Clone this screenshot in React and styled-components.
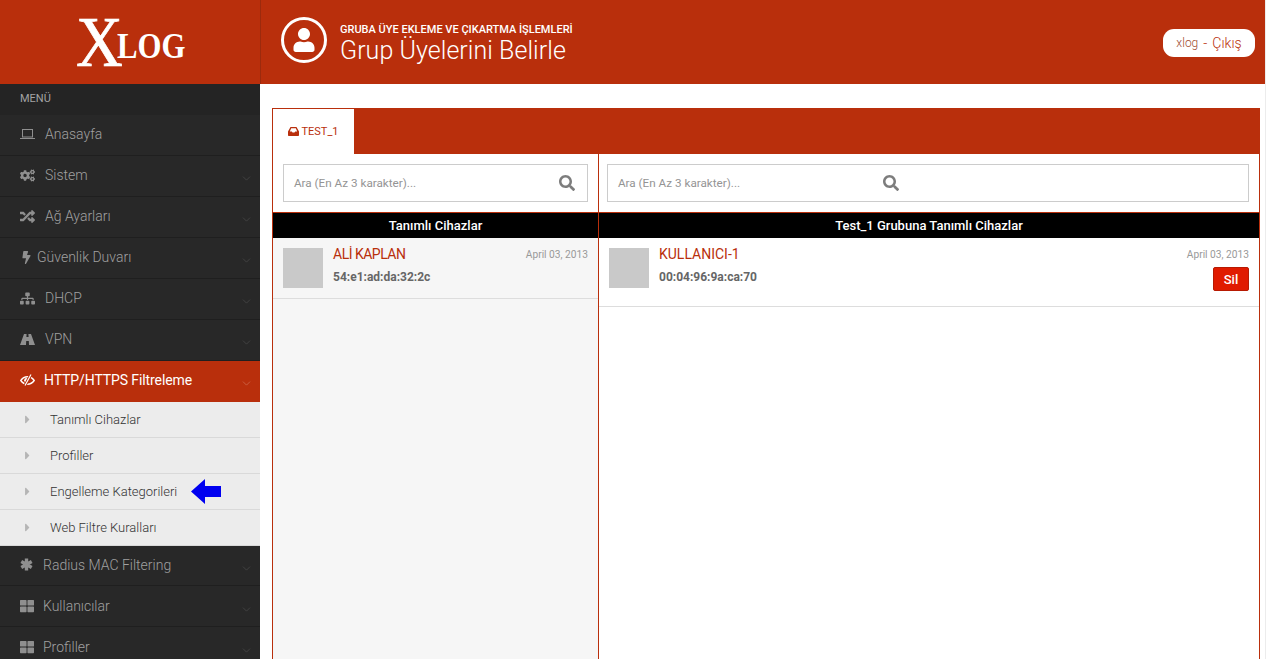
import React from 'react';
import styled, {createGlobalStyle} from 'styled-components';
import {FaCogs, FaRandom, FaBolt, FaSitemap, FaThLarge, FaSearch, FaUser, FaCaretRight} from 'react-icons/fa';
import {ChevronDown} from 'lucide-react';

const red = '#b92f0c';

const GlobalStyle = createGlobalStyle`
    html, body {margin: 0; padding: 0; height: 100%; overflow: hidden; background: #ececec;}
    body {font-family: Roboto, "Liberation Sans", sans-serif;}
    * {box-sizing: border-box;}
`;

const Page = styled.div`
    width: 1265px;
    height: 659px;
    display: flex;
    flex-direction: column;
    overflow: hidden;
    background: white;
`;

const Header = styled.header`
    height: 84px;
    flex: none;
    display: flex;
    background: ${red};
    color: white;
`;

const LogoBox = styled.div`
    width: 261px;
    flex: none;
    display: flex;
    align-items: center;
    justify-content: center;
    border-right: 1px solid #9c2a0d;
    font-family: "Liberation Serif", serif;
`;

const LogoX = styled.span`
    width: 41px;
    font-size: 72px;
    line-height: 72px;
    -webkit-text-stroke: 0.7px white;
    transform: scaleX(0.9);
    transform-origin: left;
`;

const LogoText = styled.span`
    width: 68px;
    font-size: 35px;
    font-weight: bold;
    margin-top: 9px;
    transform: scaleX(0.88);
    transform-origin: left;
`;

const HeadIcon = styled.div`
    width: 46px;
    height: 46px;
    margin: 17px 13px 0 20px;
    border: 3px solid white;
    border-radius: 50%;
    display: flex;
    align-items: center;
    justify-content: center;
    font-size: 24px;
`;

const HeadTitles = styled.div`
    padding-top: 23px;
    flex: 1;
`;

const HeadSmall = styled.div`
    font-size: 11px;
    line-height: 13px;
    font-weight: 500;
`;

const HeadBig = styled.div`
    font-size: 25px;
    line-height: 29px;
    font-weight: 300;
    letter-spacing: 0.05px;
`;

const UserPill = styled.div`
    align-self: flex-start;
    margin: 29px 10px 0 0;
    width: 92px;
    height: 28px;
    background: white;
    border-radius: 11px;
    display: flex;
    align-items: center;
    justify-content: center;
    gap: 5px;
    font-size: 14px;
    font-weight: 300;
    color: ${red};
`;

const UserName = styled.span`
    color: #a04a30;
    font-size: 12px;
`;

const Body = styled.div`
    flex: 1;
    display: flex;
    min-height: 0;
`;

const Sidebar = styled.nav`
    width: 260px;
    flex: none;
    background: #282828;
    display: flex;
    flex-direction: column;
    overflow: hidden;
`;

const MenuLabel = styled.div`
    height: 31px;
    flex: none;
    background: #242424;
    color: #a3a3a3;
    font-size: 11px;
    font-weight: 400;
    padding: 8px 0 0 20px;
`;

const NavItem = styled.div`
    height: ${props => props.$height || 41}px;
    flex: none;
    display: flex;
    align-items: center;
    padding: 0 7px ${props => props.$lift ?? 2}px 20px;
    font-size: 14px;
    font-weight: ${props => props.$active ? 400 : 300};
    letter-spacing: ${props => props.$active ? '-0.1px' : '0'};
    color: ${props => props.$active ? '#fff' : '#a0a0a0'};
    background: ${props => props.$active ? red : 'transparent'};
    border-bottom: 1px solid ${props => props.$active ? red : '#1f1f1f'};
`;

const NavIcon = styled.span`
    width: ${props => props.$width || 25}px;
    flex: none;
    display: flex;
    align-items: center;
    font-size: 14px;
    color: ${props => props.$active ? '#fff' : '#8f8f8f'};
`;

const NavLabel = styled.span`
    flex: 1;
`;

const Chevron = styled(ChevronDown)`
    width: 13px;
    height: 13px;
    color: ${props => props.$active ? '#d2765c' : '#4d4d4d'};
    stroke-width: 1.2;
    margin-top: 7px;
`;

const SubMenu = styled.div`
    flex: none;
    background: #ececec;
`;

const SubItem = styled.div`
    height: 36px;
    display: flex;
    align-items: center;
    font-size: 13px;
    font-weight: 300;
    color: #333;
    padding-left: 24px;
    border-bottom: 1px solid #d9d9d9;
`;

const SubCaret = styled(FaCaretRight)`
    width: 7px;
    height: 13px;
    color: #b5b5b5;
    margin-right: 19px;
`;

const BlueArrow = styled.svg`
    width: 30px;
    height: 25px;
    margin-left: 14px;
`;

const Main = styled.main`
    flex: 1;
    padding: 24px 5px 0 12px;
    min-width: 0;
`;

const Panel = styled.section`
    height: 100%;
    display: flex;
    flex-direction: column;
    border: 1px solid ${red};
    border-bottom: none;
`;

const TabBar = styled.div`
    height: 45px;
    flex: none;
    background: ${red};
    display: flex;
`;

const Tab = styled.div`
    width: 81px;
    background: white;
    display: flex;
    align-items: center;
    justify-content: center;
    gap: 2px;
    font-size: 11px;
    color: ${red};
`;

const Columns = styled.div`
    flex: 1;
    display: flex;
    min-height: 0;
`;

const LeftColumn = styled.div`
    width: 326px;
    flex: none;
    display: flex;
    flex-direction: column;
    border-right: 1px solid ${red};
    background: #f6f6f6;
`;

const RightColumn = styled.div`
    flex: 1;
    display: flex;
    flex-direction: column;
    min-width: 0;
`;

const SearchArea = styled.div`
    height: 59px;
    flex: none;
    background: white;
    padding: 10px ${props => props.$right}px 0 ${props => props.$left}px;
    border-bottom: 1px solid ${red};
`;

const SearchBox = styled.div`
    height: 38px;
    border: 1px solid #ccc;
    display: flex;
    align-items: center;
    padding-left: 10px;
    font-size: 11.7px;
    color: #949494;
    background: white;
`;

const SearchText = styled.span`
    width: ${props => props.$width}px;
    flex: none;
`;

const SearchIcon = styled(FaSearch)`
    width: 16px;
    height: 16px;
    color: #7d7d7d;
`;

const ListTitle = styled.div`
    height: 25px;
    flex: none;
    background: #000;
    color: white;
    font-size: 13px;
    font-weight: 500;
    text-align: center;
    line-height: 25px;
`;

const Row = styled.div`
    height: ${props => props.$height}px;
    flex: none;
    padding: 10px ${props => props.$right}px 0 10px;
    display: flex;
    border-bottom: 1px solid #ddd;
`;

const Avatar = styled.div`
    width: 40px;
    height: 40px;
    flex: none;
    background: #c9c9c9;
    margin-right: 10px;
`;

const RowInfo = styled.div`
    flex: 1;
    min-width: 0;
`;

const RowName = styled.div`
    font-size: 14px;
    line-height: 14px;
    font-weight: 400;
    margin-top: -1px;
    letter-spacing: ${props => props.$tight ? '-0.5px' : '0'};
    color: ${red};
`;

const RowMac = styled.div`
    font-size: 12px;
    font-weight: bold;
    color: #666;
    margin-top: 9px;
`;

const RowSide = styled.div`
    display: flex;
    flex-direction: column;
    align-items: flex-end;
`;

const RowDate = styled.div`
    font-size: 10.2px;
    line-height: 12px;
    margin-top: 1px;
    color: #999;
`;

const DeleteButton = styled.button`
    width: 36px;
    height: 24px;
    margin-top: 6px;
    padding: 0;
    background: #e01b00;
    border: 1px solid #b71a02;
    border-radius: 2px;
    color: white;
    font-family: inherit;
    font-size: 13px;
    font-weight: 500;
`;

const LaptopIcon = () => (
    <svg width="15" height="12" viewBox="0 0 15 12" fill="none" stroke="currentColor">
        <rect x="2.5" y="1.5" width="10" height="7.5"/>
        <path d="M0 10.5H15"/>
    </svg>
);

const RoadIcon = () => (
    <svg width="15" height="11" viewBox="0 0 15 11" fill="currentColor">
        <path d="M4 0H6.6L6.4 3H8.6L8.4 0H11L15 11H9L8.8 7H6.2L6 11H0Z"/>
    </svg>
);

const EyeSlashIcon = () => (
    <svg width="15" height="12" viewBox="0 0 15 12" fill="none" stroke="currentColor">
        <path d="M0.8 6.5C2.5 4 4.8 2.8 7.5 2.8C10.2 2.8 12.5 4 14.2 6.5C12.5 9 10.2 10.2 7.5 10.2C4.8 10.2 2.5 9 0.8 6.5Z" strokeWidth="1.4"/>
        <circle cx="6.4" cy="6.2" r="2.2" fill="currentColor" stroke="none"/>
        <path d="M11 0.5L5 11.5" stroke={red} strokeWidth="3"/>
        <path d="M11 0.5L5 11.5" strokeWidth="1.2"/>
    </svg>
);

const AsteriskIcon = () => (
    <svg width="13" height="13" viewBox="0 0 13 13" stroke="currentColor" strokeWidth="3.4">
        <path d="M6.5 0.5V12.5M1.3 3.5L11.7 9.5M1.3 9.5L11.7 3.5"/>
    </svg>
);

const InboxIcon = () => (
    <svg width="11" height="9" viewBox="0 0 11 9" fill="currentColor">
        <path d="M2.5 0H8.5L11 4.5V8C11 8.6 10.6 9 10 9H1C0.4 9 0 8.6 0 8V4.5ZM3.2 1.2L1.8 4.4H3.8L4.5 5.6H6.5L7.2 4.4H9.2L7.8 1.2Z"/>
    </svg>
);

const items = [
    {label: 'Anasayfa', icon: <LaptopIcon/>, noChevron: true},
    {label: 'Sistem', icon: <FaCogs size={15}/>},
    {label: 'Ağ Ayarları', icon: <FaRandom size={15}/>},
    {label: 'Güvenlik Duvarı', icon: <FaBolt size={13}/>, width: 17},
    {label: 'DHCP', icon: <FaSitemap size={15}/>},
    {label: 'VPN', icon: <RoadIcon/>},
];

const subItems = ['Tanımlı Cihazlar', 'Profiller', 'Engelleme Kategorileri', 'Web Filtre Kuralları'];

const App = () => {
    return (
        <Page>
            <GlobalStyle/>
            <Header>
                <LogoBox>
                    <LogoX>X</LogoX>
                    <LogoText>LOG</LogoText>
                </LogoBox>
                <HeadIcon><FaUser/></HeadIcon>
                <HeadTitles>
                    <HeadSmall>GRUBA ÜYE EKLEME VE ÇIKARTMA İŞLEMLERİ</HeadSmall>
                    <HeadBig>Grup Üyelerini Belirle</HeadBig>
                </HeadTitles>
                <UserPill><UserName>xlog</UserName> - <span>Çıkış</span></UserPill>
            </Header>
            <Body>
                <Sidebar>
                    <MenuLabel>MENÜ</MenuLabel>
                    {items.map(item => (
                        <NavItem key={item.label}>
                            <NavIcon $width={item.width}>{item.icon}</NavIcon>
                            <NavLabel>{item.label}</NavLabel>
                            {!item.noChevron && <Chevron/>}
                        </NavItem>
                    ))}
                    <NavItem $active>
                        <NavIcon $active $width={24}><EyeSlashIcon/></NavIcon>
                        <NavLabel>HTTP/HTTPS Filtreleme</NavLabel>
                        <Chevron $active/>
                    </NavItem>
                    <SubMenu>
                        {subItems.map(label => (
                            <SubItem key={label}>
                                <SubCaret/>
                                {label}
                                {label === 'Engelleme Kategorileri' && (
                                    <BlueArrow viewBox="0 0 30 25">
                                        <path d="M0 12.5 L14 0 V7 H30 V18 H14 V25 Z" fill="#0000f0"/>
                                    </BlueArrow>
                                )}
                            </SubItem>
                        ))}
                    </SubMenu>
                    <NavItem $height={40}>
                        <NavIcon $width={23}><AsteriskIcon/></NavIcon>
                        <NavLabel>Radius MAC Filtering</NavLabel>
                        <Chevron/>
                    </NavItem>
                    <NavItem $lift={0}>
                        <NavIcon $width={23}><FaThLarge/></NavIcon>
                        <NavLabel>Kullanıcılar</NavLabel>
                        <Chevron/>
                    </NavItem>
                    <NavItem $lift={0}>
                        <NavIcon $width={23}><FaThLarge/></NavIcon>
                        <NavLabel>Profiller</NavLabel>
                        <Chevron/>
                    </NavItem>
                </Sidebar>
                <Main>
                    <Panel>
                        <TabBar>
                            <Tab><InboxIcon/> TEST_1</Tab>
                        </TabBar>
                        <Columns>
                            <LeftColumn>
                                <SearchArea $left={10} $right={10}>
                                    <SearchBox>
                                        <SearchText $width={265}>Ara (En Az 3 karakter)...</SearchText>
                                        <SearchIcon/>
                                    </SearchBox>
                                </SearchArea>
                                <ListTitle>Tanımlı Cihazlar</ListTitle>
                                <Row $height={61} $right={10}>
                                    <Avatar/>
                                    <RowInfo>
                                        <RowName $tight>ALİ KAPLAN</RowName>
                                        <RowMac>54:e1:ad:da:32:2c</RowMac>
                                    </RowInfo>
                                    <RowSide>
                                        <RowDate>April 03, 2013</RowDate>
                                    </RowSide>
                                </Row>
                            </LeftColumn>
                            <RightColumn>
                                <SearchArea $left={8} $right={10}>
                                    <SearchBox>
                                        <SearchText $width={265}>Ara (En Az 3 karakter)...</SearchText>
                                        <SearchIcon/>
                                    </SearchBox>
                                </SearchArea>
                                <ListTitle>Test_1 Grubuna Tanımlı Cihazlar</ListTitle>
                                <Row $height={69} $right={10}>
                                    <Avatar/>
                                    <RowInfo>
                                        <RowName>KULLANICI-1</RowName>
                                        <RowMac>00:04:96:9a:ca:70</RowMac>
                                    </RowInfo>
                                    <RowSide>
                                        <RowDate>April 03, 2013</RowDate>
                                        <DeleteButton>Sil</DeleteButton>
                                    </RowSide>
                                </Row>
                            </RightColumn>
                        </Columns>
                    </Panel>
                </Main>
            </Body>
        </Page>
    );
};

export default App;
